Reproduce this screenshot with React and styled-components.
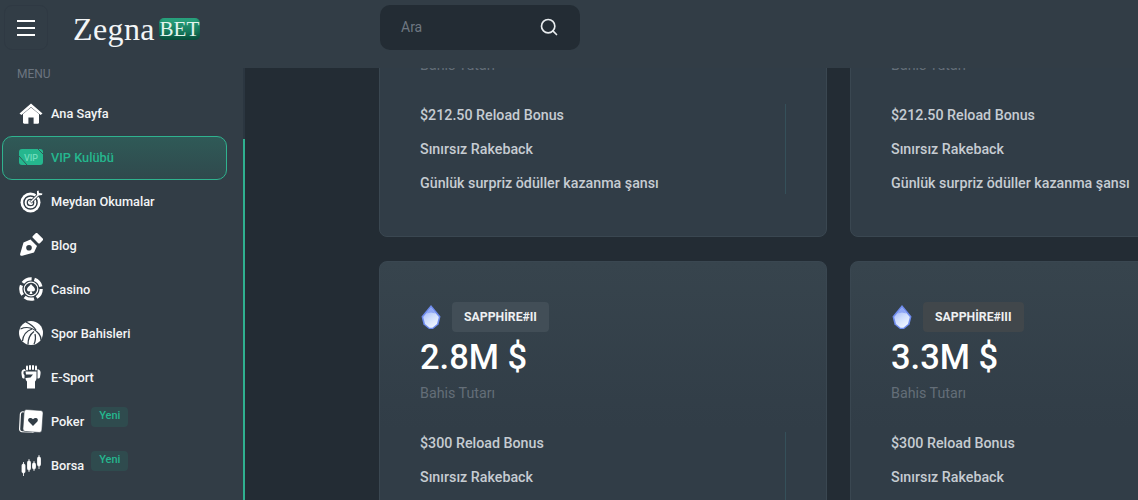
import React from 'react';
import styled, { createGlobalStyle } from 'styled-components';
import { Search } from 'lucide-react';

const GlobalStyle = createGlobalStyle`
  html, body {
    margin: 0;
    height: 100%;
    overflow: hidden;
    background: #232c34;
    font-family: Roboto, "Liberation Sans", sans-serif;
  }
`;

const Page = styled.div`
  display: flex;
  flex-direction: column;
  width: 1138px;
  height: 500px;
  overflow: hidden;
`;

const Header = styled.header`
  display: flex;
  align-items: center;
  flex: none;
  height: 68px;
  padding: 0 0 13px 4px;
  box-sizing: border-box;
  background: #323d46;
`;

const MenuButton = styled.button`
  display: flex;
  flex-direction: column;
  justify-content: center;
  align-items: center;
  gap: 5px;
  width: 44px;
  height: 45px;
  padding: 0;
  background: transparent;
  border: 1px solid #2f3943;
  border-radius: 8px;
  span {
    width: 18px;
    height: 2px;
    background: #fff;
  }
`;

const Logo = styled.div`
  display: flex;
  align-items: center;
  gap: 4px;
  margin-left: 25px;
  width: 307px;
`;

const LogoWord = styled.span`
  margin-top: 2px;
  font-family: "Liberation Serif", serif;
  font-size: 32px;
  line-height: 34px;
  letter-spacing: 0.4px;
  color: #f3f5f6;
`;

const LogoBadge = styled.span`
  margin-top: 2px;
  height: 22px;
  width: 41px;
  text-align: center;
  border-radius: 5px;
  background: linear-gradient(180deg, #2aa680 0%, #0a5c45 100%);
  box-shadow: inset 0 -3px 4px rgba(6, 60, 46, 0.5);
  font-family: "Liberation Serif", serif;
  font-size: 21px;
  line-height: 23px;
  color: #e2f3ed;
`;

const SearchBox = styled.div`
  display: flex;
  align-items: center;
  justify-content: space-between;
  width: 200px;
  height: 45px;
  box-sizing: border-box;
  padding: 0 21px 2px;
  border-radius: 10px;
  background: #232c34;
  color: #6e7781;
  font-size: 14px;
  svg {
    color: #e8ecee;
  }
`;

const Body = styled.div`
  display: flex;
  flex: 1;
  min-height: 0;
`;

const Sidebar = styled.aside`
  position: relative;
  flex: none;
  width: 245px;
  box-sizing: border-box;
  padding: 0 16px 0 2px;
  background: #323d46;
  border-right: 2px solid #2b3640;
`;

const ScrollThumb = styled.div`
  position: absolute;
  top: 71px;
  right: -2px;
  bottom: 0;
  width: 2px;
  background: #2fb08f;
`;

const MenuTitle = styled.div`
  height: 24px;
  padding-left: 15px;
  font-size: 12px;
  line-height: 12px;
  color: #6c7580;
`;

const NavItem = styled.a`
  display: flex;
  align-items: center;
  gap: 8px;
  height: 44px;
  box-sizing: border-box;
  padding: 0 0 2px 16px;
  border: 1px solid ${({ $active }) => ($active ? '#2fb38f' : 'transparent')};
  border-radius: 10px;
  background: ${({ $active }) => ($active ? 'linear-gradient(180deg, #2f5a57 0%, #30494d 100%)' : 'transparent')};
  color: ${({ $active }) => ($active ? '#25b78e' : '#f2f4f5')};
  font-size: 12.75px;
  font-weight: 500;
`;

const NavIcon = styled.span`
  display: flex;
  align-items: center;
  justify-content: center;
  flex: none;
  width: 24px;
  height: 24px;
  color: #fff;
`;

const NewBadge = styled.span`
  align-self: flex-start;
  margin: 6px 0 0 -1px;
  padding: 0 8px;
  height: 20px;
  border-radius: 4px;
  background: #2f4b4e;
  color: #25b78e;
  font-size: 11px;
  line-height: 17px;
`;

const Main = styled.main`
  flex: 1;
  min-width: 0;
  overflow: hidden;
  padding-left: 134px;
`;

const CardGrid = styled.div`
  display: grid;
  grid-template-columns: 448px 448px;
  gap: 24px 23px;
  margin-top: -35px;
`;

const Card = styled.section`
  box-sizing: border-box;
  height: ${({ $short }) => ($short ? '204px' : '304px')};
  padding: ${({ $short }) => ($short ? '17px' : '40px')} 40px 0;
  border: 1px solid #3a4751;
  border-radius: 8px;
  background: ${({ $short }) => ($short ? '#313d47' : 'linear-gradient(180deg, #37444d 0%, #313d47 55%)')};
`;

const TierRow = styled.div`
  display: flex;
  align-items: center;
  gap: 10px;
`;

const TierBadge = styled.span`
  height: 30px;
  padding: 0 12px;
  border-radius: 4px;
  background: ${({ $warm }) => ($warm ? '#41474b' : '#424e57')};
  color: #eef0f2;
  font-size: 12.25px;
  font-weight: 700;
  line-height: 30px;
`;

const Amount = styled.div`
  margin-top: 3px;
  font-size: 34.5px;
  font-weight: 500;
  line-height: 44px;
  color: #fff;
`;

const AmountLabel = styled.div`
  margin-top: 4px;
  font-size: 14.25px;
  line-height: 20px;
  color: #646e78;
`;

const PerkList = styled.ul`
  display: flex;
  flex-direction: column;
  gap: 12px;
  width: 365px;
  margin: 29px 0 0;
  padding: 0;
  list-style: none;
  border-right: 1px solid #35505a;
`;

const Perk = styled.li`
  height: 22px;
  font-size: 14.25px;
  font-weight: 500;
  line-height: 22px;
  white-space: nowrap;
  color: #c6ccd2;
`;

const HomeIcon = () => (
  <svg width="24" height="21" viewBox="0 0 24 21" fill="#fff">
    <path d="M12 0.5 L23.5 10.4 L21.6 12 L12 4 L2.4 12 L0.5 10.4 Z" />
    <path d="M12 4.5 L20 11 V19.5 C20 20.3 19.5 20.7 18.8 20.7 H14.6 V14.5 H9.4 V20.7 H5.2 C4.5 20.7 4 20.3 4 19.5 V11 Z" />
  </svg>
);

const VipIcon = () => (
  <svg width="24" height="16" viewBox="0 0 24 16">
    <rect width="24" height="16" rx="3" fill="#25b78e" />
    <path d="M0 7 L8 16 M19 0 L24 5" stroke="#2f5a57" strokeWidth="1" />
    <text x="12" y="11.5" textAnchor="middle" fontSize="9" fontFamily="Roboto" fill="#6fdcbc">VIP</text>
  </svg>
);

const TargetIcon = () => (
  <svg width="23" height="23" viewBox="0 0 23 23">
    <circle cx="10.5" cy="12.5" r="10" fill="#fff" />
    <circle cx="10.5" cy="12.5" r="6.6" fill="none" stroke="#323d46" strokeWidth="1.5" />
    <circle cx="10.5" cy="12.5" r="3.2" fill="none" stroke="#323d46" strokeWidth="1.3" />
    <path d="M10.5 12.5 L19 4" stroke="#323d46" strokeWidth="3" />
    <path d="M10.5 12.5 L19 4" stroke="#fff" strokeWidth="1.4" />
    <path d="M17 1 L18.6 0.6 L19 3 L22.4 3.4 L22 5 L18.5 5.6 L17 4.5 Z" fill="#fff" />
  </svg>
);

const NibIcon = () => (
  <svg width="24" height="24" viewBox="0 0 24 24" fill="#fff">
    <rect x="13.8" y="2" width="10" height="6.4" rx="1.2" transform="rotate(45 18.8 5.2)" />
    <path fillRule="evenodd" d="M11.5 6.5 L18 13 L15 19.5 L3.2 22.8 C1.8 23.1 0.8 22.2 1.2 20.8 L4.5 9.5 Z M10 12 A2.8 2.8 0 1 0 10 17.6 A2.8 2.8 0 1 0 10 12 Z" />
  </svg>
);

const ChipIcon = () => (
  <svg width="24" height="24" viewBox="0 0 24 24" fill="#fff">
    <circle cx="12" cy="12" r="10.2" fill="none" stroke="#fff" strokeWidth="3.2" strokeDasharray="10 2.8" />
    <circle cx="12" cy="12" r="6.8" fill="none" stroke="#fff" strokeWidth="1.2" />
    <path d="M12 7 C13.5 9 16 10.2 16 12.5 C16 14.4 13.8 15 12.6 14 L13.5 17 L10.5 17 L11.4 14 C10.2 15 8 14.4 8 12.5 C8 10.2 10.5 9 12 7 Z" />
  </svg>
);

const BallIcon = () => (
  <svg width="24" height="24" viewBox="0 0 24 24">
    <circle cx="12" cy="12" r="12" fill="#fff" />
    <g fill="none" stroke="#323d46" strokeWidth="1.3">
      <path d="M1.5 8 C8 5 15 7 20 13 C21.5 15 22 17 22 19" />
      <path d="M7 1 C11 3 15 6 17 9" />
      <path d="M3.5 20 C4 15 7 10 13 8" />
      <path d="M9 23.5 C9 18 11.5 13 15 10.5" />
      <path d="M16 13 C17 17 16.5 20 15 23" />
    </g>
  </svg>
);

const FistIcon = () => (
  <svg width="20" height="24" viewBox="0 0 20 24" fill="#fff">
    <rect x="5" y="0.5" width="2" height="5" rx="1" />
    <rect x="8" y="0" width="2" height="5" rx="1" />
    <rect x="11" y="0" width="2" height="5" rx="1" />
    <rect x="14" y="0.5" width="2" height="5" rx="1" />
    <path d="M3.5 4 C1 4.5 0 6.5 0.5 9 L1 12 C1.2 13 2 13.5 3.5 13.5 V10 L2.5 9 V6.5 L5 5.5 Z" />
    <path d="M16.5 4 C19 4.5 20 6.5 19.5 9 L19 12 C18.8 13 18 13.5 16.5 13.5 V6 Z" />
    <path d="M4.5 6.5 H15.5 V13 C15.5 15 14.5 16 14 16.5 V23.5 H6 V16.5 C5 15.5 4.5 14.5 4.5 13 L9.5 12.5 L12 9.5 L5 9.5 Z" />
  </svg>
);

const PokerIcon = () => (
  <svg width="24" height="24" viewBox="0 0 24 24">
    <rect x="1" y="3" width="15" height="20" rx="2.5" fill="none" stroke="#fff" strokeWidth="1.2" transform="rotate(3 8 13)" />
    <rect x="4.5" y="1" width="19" height="22" rx="2.5" fill="#fff" stroke="#323d46" strokeWidth="0.6" transform="rotate(4 14 12)" />
    <path d="M14 17 L9.6 12.5 C7.8 10 11.4 7.6 14 10.3 C16.6 7.6 20.2 10 18.4 12.5 Z" fill="#323d46" />
  </svg>
);

const CandleIcon = () => (
  <svg width="20" height="22" viewBox="0 0 20 22" fill="#fff" stroke="#fff" strokeWidth="0.8">
    <path d="M2.5 8 V22 M8 5 V18 M13 7 V17 M18 1 V15" fill="none" />
    <rect x="1" y="10" width="3" height="9" rx="1.4" />
    <rect x="6.5" y="7" width="3" height="9" rx="1.4" />
    <rect x="11.5" y="9" width="3" height="6" rx="1.4" />
    <rect x="16.5" y="3" width="3" height="9" rx="1.4" />
  </svg>
);

const GemIcon = () => (
  <svg width="22" height="26" viewBox="0 0 22 26">
    <defs>
      <linearGradient id="gemFill" x1="0.2" y1="0" x2="0.7" y2="1">
        <stop offset="0" stopColor="#9db2f7" />
        <stop offset="0.5" stopColor="#cddcfc" />
        <stop offset="1" stopColor="#f2f7ff" />
      </linearGradient>
    </defs>
    <path d="M11 1 L20.5 12.5 L18.5 20.5 L13 25 L9 25 L3.5 20.5 L1.5 12.5 Z" fill="#6f8cee" />
    <path d="M11 3.5 L18.8 13 L17 20 L12.4 23.8 L9.6 23.8 L5 20 L3.2 13 Z" fill="url(#gemFill)" />
    <path d="M11 3.5 L15.5 9.5 L11 8.5 L6.5 9.5 Z" fill="#8ea6f5" />
  </svg>
);

const navItems = [
  { label: 'Ana Sayfa', icon: <HomeIcon /> },
  { label: 'VIP Kulübü', icon: <VipIcon />, active: true },
  { label: 'Meydan Okumalar', icon: <TargetIcon /> },
  { label: 'Blog', icon: <NibIcon /> },
  { label: 'Casino', icon: <ChipIcon /> },
  { label: 'Spor Bahisleri', icon: <BallIcon /> },
  { label: 'E-Sport', icon: <FistIcon /> },
  { label: 'Poker', icon: <PokerIcon />, isNew: true },
  { label: 'Borsa', icon: <CandleIcon />, isNew: true },
];

const cards = [
  { reload: '$212.50' },
  { reload: '$212.50' },
  { tier: 'SAPPHİRE#II', amount: '2.8M $', reload: '$300' },
  { tier: 'SAPPHİRE#III', amount: '3.3M $', reload: '$300', warm: true },
];

const App = () => (
  <Page>
    <GlobalStyle />
    <Header>
      <MenuButton aria-label="Menu">
        <span />
        <span />
        <span />
      </MenuButton>
      <Logo>
        <LogoWord>Zegna</LogoWord>
        <LogoBadge>BET</LogoBadge>
      </Logo>
      <SearchBox>
        Ara
        <Search size={20} />
      </SearchBox>
    </Header>
    <Body>
      <Sidebar>
        <MenuTitle>MENU</MenuTitle>
        {navItems.map(({ label, icon, active, isNew }) => (
          <NavItem key={label} $active={active}>
            <NavIcon>{icon}</NavIcon>
            {label}
            {isNew && <NewBadge>Yeni</NewBadge>}
          </NavItem>
        ))}
        <ScrollThumb />
      </Sidebar>
      <Main>
        <CardGrid>
          {cards.map(({ tier, amount, reload, warm }, index) => (
            <Card key={index} $short={!tier}>
              {tier && (
                <>
                  <TierRow>
                    <GemIcon />
                    <TierBadge $warm={warm}>{tier}</TierBadge>
                  </TierRow>
                  <Amount>{amount}</Amount>
                </>
              )}
              <AmountLabel>Bahis Tutarı</AmountLabel>
              <PerkList>
                <Perk>{reload} Reload Bonus</Perk>
                <Perk>Sınırsız Rakeback</Perk>
                <Perk>Günlük surpriz ödüller kazanma şansı</Perk>
              </PerkList>
            </Card>
          ))}
        </CardGrid>
      </Main>
    </Body>
  </Page>
);

export default App;
